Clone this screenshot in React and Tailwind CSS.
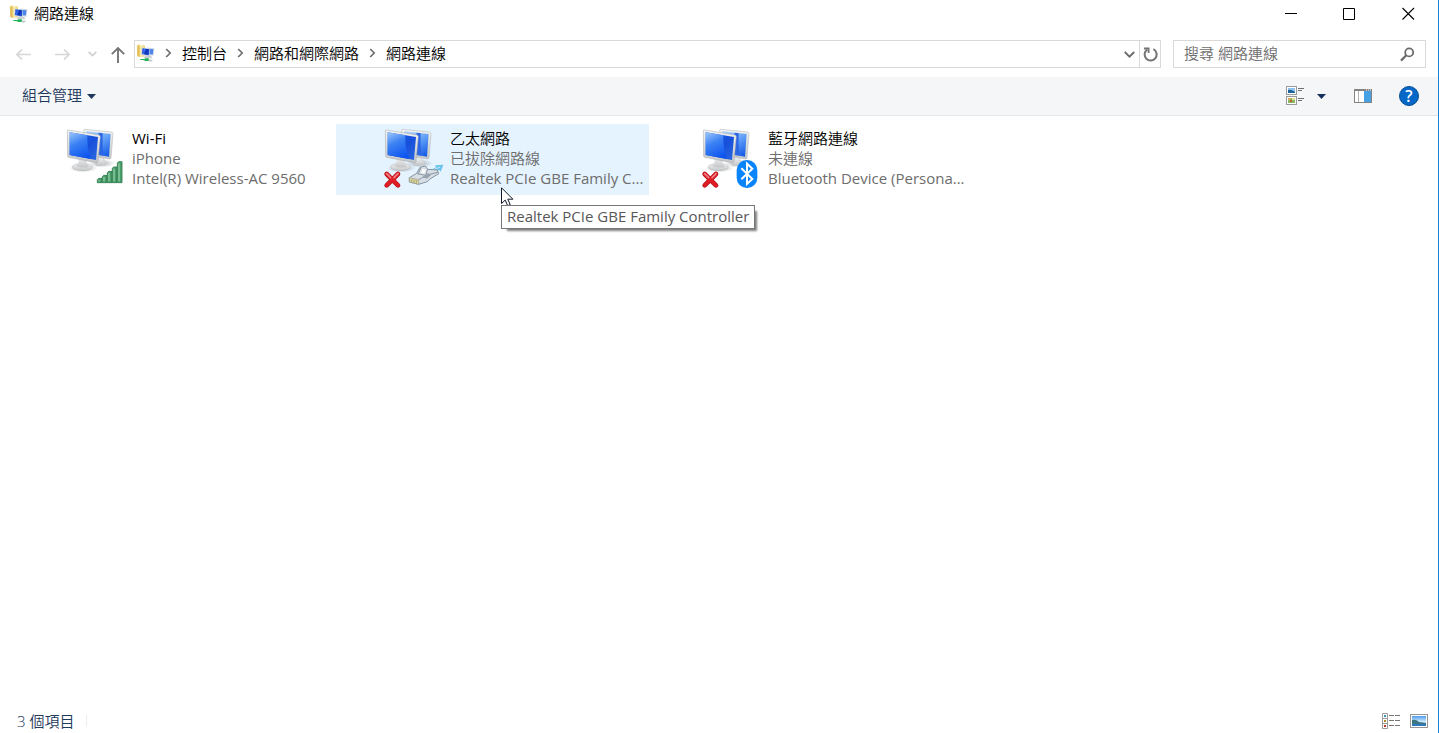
import { Fragment, useId } from 'react';

const FONT = "font-['Open_Sans','Noto_Sans_CJK_TC',sans-serif]";

function FolderIcon() {
  const id = useId();
  return (
    <svg width="18" height="18" viewBox="2 0 56 58" aria-hidden="true" className="shrink-0">
      <defs>
        <linearGradient id={id + 'f'} x1="0" x2="1" y1="0" y2="0">
          <stop offset="0" stopColor="#e9c766" />
          <stop offset="0.5" stopColor="#fbeeb0" />
          <stop offset="1" stopColor="#ecd079" />
        </linearGradient>
        <linearGradient id={id + 's'} x1="0" x2="1" y1="0" y2="0.3">
          <stop offset="0" stopColor="#1431b4" />
          <stop offset="0.4" stopColor="#3a72f2" />
          <stop offset="0.6" stopColor="#0b2fb4" />
          <stop offset="1" stopColor="#1a48cc" />
        </linearGradient>
      </defs>
      <path d="M2 3 L9 1 L13 4 L24 3 L27 8 L25 41 L8 42 L2 38 Z" fill={'url(#' + id + 'f)'} />
      <path d="M2 4 L9 8 L9 42 L2 38 Z" fill="#e3bd55" />
      <path d="M33 11 L57 14 L54 38 L36 36 Z" fill="#d3dce4" />
      <path d="M37 15 L54 17 L52 34 L38 33 Z" fill="#4f86ea" />
      <path d="M16 11 L43 15 L41 40 L14 35 Z" fill="#c9d6e2" />
      <path d="M19 14 L41 17 L39 36 L17 32 Z" fill={'url(#' + id + 's)'} />
      <path d="M26 37 L37 39 L48 38 L48 43 L52 46 L20 46 L26 42 Z" fill="#c9cfd2" />
      <path d="M11 48 L26 48 L28 46 L38 46 L40 50 L38 55 L27 55 L24 52 L11 51 Z" fill="#22b357" />
      <path d="M40 50 L50 51 L51 55 L40 57 Z" fill="#b9c8c1" />
    </svg>
  );
}

function Monitors({ id }) {
  return (
    <>
      <defs>
        <linearGradient id={id + 'a'} x1="0" x2="1" y1="0" y2="0.9">
          <stop offset="0" stopColor="#1d5fe6" />
          <stop offset="0.6" stopColor="#1650db" />
          <stop offset="1" stopColor="#2a66e0" />
        </linearGradient>
        <linearGradient id={id + 'b'} x1="0.2" x2="0.6" y1="0" y2="1">
          <stop offset="0" stopColor="#8fbdf8" />
          <stop offset="0.4" stopColor="#3c82f4" />
          <stop offset="1" stopColor="#0d55f0" />
        </linearGradient>
        <linearGradient id={id + 'e'} x1="0.3" x2="0.9" y1="0" y2="1">
          <stop offset="0" stopColor="#a5cdfb" />
          <stop offset="0.45" stopColor="#5b9bf6" />
          <stop offset="1" stopColor="#1257e6" />
        </linearGradient>
        <linearGradient id={id + 'c'} x1="0" x2="0" y1="0" y2="1">
          <stop offset="0" stopColor="#f3f3f3" />
          <stop offset="1" stopColor="#c3c6c8" />
        </linearGradient>
        <radialGradient id={id + 'd'}>
          <stop offset="0" stopColor="#8b8f93" stopOpacity="0.7" />
          <stop offset="1" stopColor="#8b8f93" stopOpacity="0" />
        </radialGradient>
      </defs>
      <ellipse cx="124" cy="118" rx="40" ry="13" fill={'url(#' + id + 'd)'} />
      <path d="M112 100 L132 102 L132 111 Q142 114 140 119 Q132 125 108 124 Z" fill={'url(#' + id + 'c)'} stroke="#b8bbbd" />
      <path d="M71 19 Q71 15 75 16 L155 24 Q159 25 159 29 L153 102 Q152 105 148 105 L78 92 Z" fill={'url(#' + id + 'c)'} stroke="#aeb1b3" strokeWidth="1.5" />
      <path d="M79 22 L152 30 L147 98 L84 86 Z" fill={'url(#' + id + 'e)'} />
      <path d="M116 26 L128 28 Q126 62 130 95 L112 92 Z" fill="#2b66e4" />
      <ellipse cx="70" cy="133" rx="42" ry="12" fill={'url(#' + id + 'd)'} />
      <ellipse cx="67" cy="129" rx="30" ry="11" fill={'url(#' + id + 'c)'} stroke="#b0b3b5" strokeWidth="1.5" />
      <path d="M54 99 L83 103 L80 116 Q83 125 88 128 Q67 134 48 126 Q56 121 56 113 Z" fill={'url(#' + id + 'c)'} />
      <path d="M22 21 Q22 17 26 18 L117 33 Q121 34 121 38 L114 113 Q113 117 109 116 L26 100 Q23 99 23 96 Z" fill={'url(#' + id + 'c)'} stroke="#a3a7aa" strokeWidth="1.5" />
      <path d="M29 25 L114 39 L108 108 L29 93 Z" fill={'url(#' + id + 'a)'} />
      <path d="M29 25 L82 34 Q80 67 93 105 L29 93 Z" fill={'url(#' + id + 'b)'} />
    </>
  );
}

function SignalBars() {
  const bars = [[112, 163], [127, 154], [142, 142], [157, 129], [172, 113]];
  return (
    <g>
      {bars.map(([x, y]) => (
        <g key={x}>
          <path d={`M${x} ${y + 4} L${x + 4} ${y} H${x + 14} V176 H${x} Z`} fill="#4c9d6c" stroke="#2b7c4c" strokeWidth="2.5" />
          <path d={`M${x + 5} ${y + 5} V172`} stroke="#8fd0a5" strokeWidth="4" />
        </g>
      ))}
    </g>
  );
}

function Cross() {
  return (
    <g strokeLinecap="round" fill="none">
      <path d="M26 150 L60 184 M60 150 L26 184" stroke="#b5121a" strokeWidth="14" />
      <path d="M26 150 L60 184 M60 150 L26 184" stroke="#e01c24" strokeWidth="10" />
      <path d="M26 149 L38 161 M60 149 L48 161" stroke="#f08085" strokeWidth="5" />
    </g>
  );
}

function Plug() {
  return (
    <g strokeLinejoin="round">
      <path d="M154 140 L174 130 L172 124 L196 122 L188 143 L183 137 L166 149 Z" fill="#69c2e8" />
      <path d="M156 142 L186 129" stroke="#b4e6f8" strokeWidth="4" />
      <path d="M94 161 L116 148 L126 130 L142 126 L149 136 L178 138 L182 149 L156 165 L148 173 L122 181 L94 174 Z" fill="#d7dee4" stroke="#8693a0" strokeWidth="3" />
      <path d="M94 161 L122 167 L122 181 L94 174 Z" fill="#dbd6a4" stroke="#9a9f91" strokeWidth="2" />
      <path d="M101 166 V175 M108 167 V176 M115 168 V178" stroke="#a19c62" strokeWidth="2.5" />
      <path d="M122 167 L150 152 L180 145 M117 149 L143 154 L149 136 M128 132 L121 149" fill="none" stroke="#8c97a3" strokeWidth="3" />
      <path d="M132 159 L147 164 L160 152 L150 148 Z" fill="#97a3af" />
      <path d="M134 134 L129 147 L139 149 L144 137 Z" fill="#f8fafb" />
    </g>
  );
}

function BluetoothBadge() {
  return (
    <g>
      <rect x="122" y="108" width="62" height="84" rx="30" fill="#0a84fb" />
      <path d="M136 133 L169 165 L153 180 V119 L169 134 L136 166" fill="none" stroke="#fff" strokeWidth="6" strokeLinejoin="miter" />
    </g>
  );
}

function ConnectionIcon({ kind }) {
  const id = useId();
  return (
    <svg width="70" height="66" viewBox="0 0 210 198" aria-hidden="true" className="shrink-0">
      <Monitors id={id} />
      {kind === 'wifi' && <SignalBars />}
      {kind !== 'wifi' && <Cross />}
      {kind === 'ethernet' && <Plug />}
      {kind === 'bluetooth' && <BluetoothBadge />}
    </svg>
  );
}

function Crumb() {
  return (
    <svg width="7" height="10" viewBox="0 0 7 10" fill="none" aria-hidden="true">
      <path d="M1.2 1 L5.2 5 L1.2 9" stroke="#6e6e6e" strokeWidth="1.7" />
    </svg>
  );
}

const connections = [
  { kind: 'wifi', name: 'Wi-Fi', status: 'iPhone', device: 'Intel(R) Wireless-AC 9560' },
  {
    kind: 'ethernet',
    name: '乙太網路',
    status: '已拔除網路線',
    device: 'Realtek PCIe GBE Family C...',
    tooltip: 'Realtek PCIe GBE Family Controller',
  },
  { kind: 'bluetooth', name: '藍牙網路連線', status: '未連線', device: 'Bluetooth Device (Persona...' },
];

function Tile({ item }) {
  return (
    <li className="relative w-[313px]">
      <button
        type="button"
        className={
          'flex h-[71px] w-full gap-[2px] pl-[42px] text-left ' +
          (item.tooltip ? 'bg-[#e5f3ff] ' : '') +
          (item.kind === 'wifi' ? 'font-normal' : '')
        }
      >
        <ConnectionIcon kind={item.kind} />
        <span className="flex flex-col pt-1 leading-5 whitespace-nowrap text-[#6d6d6d]">
          <span className="text-black">{item.name}</span>
          <span>{item.status}</span>
          <span className="font-normal">{item.device}</span>
        </span>
      </button>
      {item.tooltip && (
        <>
          <div
            role="tooltip"
            className="absolute top-[81px] left-[165px] z-10 border border-[#767676] bg-white px-[5px] pb-px leading-[21px] font-normal whitespace-nowrap text-[#575757] shadow-[4px_4px_2px_-2px_#00000080]"
          >
            {item.tooltip}
          </div>
          <svg width="13" height="19" viewBox="0 0 13 19" aria-hidden="true" className="absolute top-[63px] left-[165px] z-0">
            <path d="M0.5 0.8 V16.5 L4.2 13.1 L6.7 18.7 L9.2 17.6 L6.8 12.2 H11.9 Z" fill="#fff" stroke="#111827" />
          </svg>
        </>
      )}
    </li>
  );
}

function Thumbnail({ x, y, w, h, children }) {
  return (
    <g>
      <rect x={x + 0.5} y={y + 0.5} width={w - 1} height={h - 1} fill="#fff" stroke="#9a9a9a" />
      {children}
    </g>
  );
}

export default function App() {
  const id = useId();
  return (
    <div className={'flex min-h-screen flex-col border-r border-[#1883d7] bg-white text-[15px] font-[350] text-black ' + FONT}>
      <header className="flex h-[27px] items-center">
        <div className="flex flex-1 items-center gap-[6px] pl-[10px]">
          <FolderIcon />
          <h1 className="pb-[2px] leading-5">網路連線</h1>
        </div>
        <button type="button" aria-label="最小化" className="flex h-full w-[59px] items-center justify-center">
          <svg width="13" height="13" viewBox="0 0 13 13"><path d="M1 6.5 H13" stroke="#000" /></svg>
        </button>
        <button type="button" aria-label="最大化" className="flex h-full w-[59px] items-center justify-center">
          <svg width="13" height="13" viewBox="0 0 13 13" fill="none"><path d="M0.5 1.5 H11.5 V12.5 H0.5 Z" stroke="#000" /></svg>
        </button>
        <button type="button" aria-label="關閉" className="flex h-full w-[59px] items-center justify-center">
          <svg width="13" height="13" viewBox="0 0 13 13"><path d="M0.5 1 L12 12.5 M12 1 L0.5 12.5" stroke="#000" strokeWidth="1.1" /></svg>
        </button>
      </header>

      <div className="mt-[13px] flex h-7 items-center pr-3">
        <nav className="flex w-[134px] shrink-0 items-center pl-4">
          <button type="button" aria-label="上一頁">
            <svg width="15" height="12" viewBox="0 0 15 12" fill="none"><path d="M15 6.5 H1 M6 1.5 L1 6.5 L6 11.5" stroke="#d6d6d6" strokeWidth="1.7" /></svg>
          </button>
          <button type="button" aria-label="下一頁" className="ml-6">
            <svg width="15" height="12" viewBox="0 0 15 12" fill="none"><path d="M0 6.5 H14 M9 1.5 L14 6.5 L9 11.5" stroke="#d6d6d6" strokeWidth="1.7" /></svg>
          </button>
          <button type="button" aria-label="最近的位置" className="ml-[18px]">
            <svg width="9" height="6" viewBox="0 0 9 6" fill="none"><path d="M0.7 0.8 L4.5 4.6 L8.3 0.8" stroke="#d0d0d0" strokeWidth="1.7" /></svg>
          </button>
          <button type="button" aria-label="上移一層" className="ml-[14px]">
            <svg width="14" height="18" viewBox="0 0 14 18" fill="none"><path d="M7 18 V3 M0.8 9.2 L7 3 L13.2 9.2" stroke="#757575" strokeWidth="1.9" /></svg>
          </button>
        </nav>

        <div className="flex h-7 min-w-0 flex-1 items-center border border-[#d9d9d9]">
          <div className="flex flex-1 items-center gap-[10px] pb-[2px] pl-[2px]">
            <FolderIcon />
            {['控制台', '網路和網際網路', '網路連線'].map((label) => (
              <Fragment key={label}>
                <Crumb />
                <a href="#" className="leading-5">{label}</a>
              </Fragment>
            ))}
          </div>
          <button type="button" aria-label="先前的位置" className="px-1">
            <svg width="11" height="8" viewBox="0 0 11 8" fill="none"><path d="M0.8 2 L5.5 6.7 L10.2 2" stroke="#6e6e6e" strokeWidth="1.9" /></svg>
          </button>
          <button type="button" aria-label="重新整理" className="flex h-full w-[21px] items-center justify-center border-l border-[#d9d9d9]">
            <svg width="16" height="16" viewBox="0 0 16 16" fill="none">
              <path d="M11.4 3.2 A6 6 0 1 1 5.2 3.6" stroke="#757575" strokeWidth="2" />
              <path d="M2 2.5 H6.6 V7" stroke="#757575" strokeWidth="1.8" />
            </svg>
          </button>
        </div>

        <div className="ml-3 flex h-7 w-[253px] shrink-0 items-center border border-[#d9d9d9] px-[10px]">
          <input
            type="text"
            aria-label="搜尋 網路連線"
            placeholder="搜尋 網路連線"
            className="h-full min-w-0 flex-1 pb-[2px] outline-none placeholder:text-[#6d6d6d]"
          />
          <svg width="15" height="15" viewBox="0 0 15 15" fill="none" aria-hidden="true">
            <circle cx="9.2" cy="5.4" r="4" stroke="#6b6b6b" strokeWidth="1.8" />
            <path d="M6.3 8.3 L1 13.6" stroke="#6b6b6b" strokeWidth="2.2" />
          </svg>
        </div>
      </div>

      <div className="mt-[9px] flex h-[39px] items-center border-b border-[#e4e7ea] bg-[#f5f6f7] pr-[19px] pl-[22px] text-[#1e395b]">
        <button type="button" className="flex items-center gap-[5px] leading-5">
          <span className="pb-[2px]">組合管理</span>
          <svg width="9" height="5" viewBox="0 0 9 5" aria-hidden="true"><path d="M0 0 H9 L4.5 5 Z" fill="#1e395b" /></svg>
        </button>
        <div className="ml-auto flex items-center">
          <button type="button" aria-label="變更檢視">
            <svg width="19" height="20" viewBox="0 0 19 20">
              <Thumbnail x={1} y={0} w={11} h={9}>
                <rect x="3" y="2" width="7" height="5" fill="#8fc3ef" />
                <path d="M3 4 Q6 3 10 6 V7 H3 Z" fill="#1d6297" />
              </Thumbnail>
              <Thumbnail x={1} y={10} w={11} h={9}>
                <rect x="3" y="12" width="7" height="5" fill="#8db862" />
                <rect x="3" y="12" width="3" height="2" fill="#d9a95a" />
                <rect x="7" y="12" width="3" height="2" fill="#e6df92" />
                <rect x="5" y="14" width="2" height="2" fill="#b5603c" />
              </Thumbnail>
              <path d="M13 2.5 H19 M13 4.5 H17 M13 12.5 H19 M13 14.5 H17" stroke="#6f6f6f" />
            </svg>
          </button>
          <button type="button" aria-label="更多選項" className="ml-[13px]">
            <svg width="9" height="5" viewBox="0 0 9 5"><path d="M0 0 H9 L4.5 5 Z" fill="#172f5b" /></svg>
          </button>
          <button type="button" aria-label="預覽窗格" className="ml-7">
            <svg width="18" height="14" viewBox="0 0 18 14">
              <rect x="0.5" y="0.5" width="17" height="13" fill="#fff" stroke="#838383" />
              <path d="M0 1 H18" stroke="#838383" strokeWidth="2" />
              <path d="M12 1 H13 M14 1 H15 M16 1 H17" stroke="#fff" />
              <path d="M4.5 2 V13" stroke="#b3b3b3" />
              <rect x="10" y="2" width="7" height="11" fill="#46a0e4" />
            </svg>
          </button>
          <button
            type="button"
            aria-label="說明"
            className="ml-[27px] flex size-5 items-center justify-center rounded-full border border-[#064f91] bg-[#0568c8] text-base leading-5 font-semibold text-white"
          >
            ?
          </button>
        </div>
      </div>

      <main className="flex-1 px-[18px] pt-2">
        <ul className="flex flex-wrap gap-[5px]">
          {connections.map((item) => (
            <Tile key={item.kind} item={item} />
          ))}
        </ul>
      </main>

      <footer className="flex h-6 items-center pr-[10px] pl-[17px] text-[#1e395b]">
        <span className="leading-5">3 個項目</span>
        <span className="ml-3 h-3 w-px bg-[#ededed]" />
        <div className="ml-auto flex items-center gap-[10px]">
          <button type="button" aria-label="詳細資料">
            <svg width="18" height="16" viewBox="0 0 18 16">
              <path d="M0.5 0.5 H5.5 V15.5 H0.5 Z M0.5 5.5 H5.5 M0.5 10.5 H5.5" fill="#fff" stroke="#9b9b9b" />
              <rect x="2" y="2" width="2" height="2" fill="#3a8fb4" />
              <rect x="2" y="7" width="2" height="2" fill="#b38a22" />
              <rect x="2" y="12" width="2" height="2" fill="#b83a22" />
              <path d="M7 2.5 H12 M13 2.5 H18 M7 7.5 H12 M13 7.5 H18 M7 12.5 H12 M13 12.5 H18" stroke="#767676" />
            </svg>
          </button>
          <button type="button" aria-label="大圖示">
            <svg width="18" height="14" viewBox="0 0 18 14">
              <defs>
                <linearGradient id={id} x1="0" x2="0" y1="0" y2="1">
                  <stop offset="0" stopColor="#4f9cec" />
                  <stop offset="0.6" stopColor="#d7efff" />
                  <stop offset="1" stopColor="#2b75b2" />
                </linearGradient>
              </defs>
              <rect x="0.5" y="0.5" width="17" height="13" fill="#fff" stroke="#969696" />
              <rect x="2" y="2" width="14" height="10" fill={'url(#' + id + ')'} />
              <path d="M2 6 Q6 5 9 8 L16 9 V10 H2 Z" fill="#3b7580" />
              <path d="M2 10 H16 V12 H2 Z" fill="#2f79c0" />
            </svg>
          </button>
        </div>
      </footer>
    </div>
  );
}
